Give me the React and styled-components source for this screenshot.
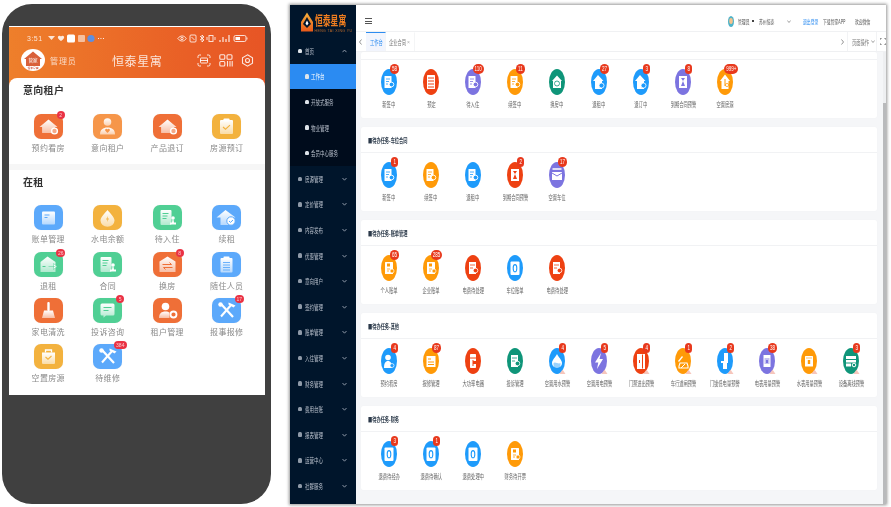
import React from 'react';
import styled, { createGlobalStyle } from 'styled-components';

const Global = createGlobalStyle`
  html, body { margin: 0; padding: 0; background: #fff; }
  body { font-family: "Noto Sans CJK SC", "Liberation Sans", sans-serif; }
  * { box-sizing: border-box; }
`;
const Root = styled.div`
  width: 891px; height: 507px; display: flex; gap: 19px; padding: 4px 0 0 2px;
  overflow: hidden; background: #fff; filter: blur(0.4px);
`;
const Defs = styled.svg`position: absolute; width: 0; height: 0;`;

/* ---------- phone ---------- */
const Phone = styled.div`
  width: 269px; height: 500px; flex: none; background: #404040; border-radius: 30px;
  padding: 22px 6px 0 7px;
`;
const Screen = styled.div`
  width: 256px; height: 369px; border-top: 1px solid #fff;
  background: linear-gradient(90deg, #ee7f2b 0%, #e95f26 70%, #e75525 100%) top / 100% 62px no-repeat, #fff;
  display: flex; flex-direction: column;
`;
const Header = styled.div`height: 51px; flex: none; display: flex; flex-direction: column; padding-top: 3px;`;
const Status = styled.div`
  height: 16px; display: flex; align-items: center; justify-content: space-between;
  padding: 0 17px 0 18px; color: rgba(255,255,255,.8); font: 7px/1 "Liberation Sans", sans-serif; letter-spacing: .5px;
`;
const StatusLeft = styled.div`display: flex; align-items: center; gap: 4px;`;
const AppRow = styled.div`height: 28px; display: flex; align-items: center; padding: 0 11px 0 12px;`;
const Role = styled.span`margin-left: 5px; width: 62px; font-size: 8px; letter-spacing: .9px; color: rgba(255,255,255,.72);`;
const AppTitle = styled.span`width: 85px; font-size: 12px; letter-spacing: .6px; color: rgba(255,255,255,.82);`;
const HeadIcons = styled.div`display: flex; gap: 8px; align-items: center; margin-left: auto;`;
const Section = styled.div`
  background: #fff; border-radius: ${p => p.$first ? '8px 8px 0 0' : '0'};
  height: ${p => p.$h}px; flex: none; padding-top: 6px;
`;
const Divider = styled.div`height: 6px; flex: none; background: #f6f6f6;`;
const SecTitle = styled.div`
  height: 12px; line-height: 12px; padding-left: 14px; font-size: 10px; font-weight: 700; letter-spacing: .3px; color: #333;
`;
const MGrid = styled.div`
  display: grid; grid-template-columns: repeat(4, 59.5px); grid-auto-rows: 46.4px;
  padding-left: 9.5px; margin-top: ${p => p.$mt}px;
`;
const MCell = styled.div`display: flex; flex-direction: column; align-items: center;`;
const MIconBox = styled.div`
  position: relative; width: 29px; height: 25px; border-radius: 7px; background: ${p => p.$c};
  box-shadow: 0 0 1px rgba(0,0,0,.08);
`;
const MLabel = styled.div`margin-top: 4px; height: 10px; line-height: 10px; font-size: 8px; letter-spacing: .35px; color: #8a8a8a; white-space: nowrap;`;
const MBadge = styled.span`
  position: absolute; top: -3px; left: ${p => 27 - p.$w / 2}px;
  width: ${p => p.$w}px; height: 8px; border-radius: 4px; background: #ea3244;
  color: rgba(255,255,255,.75); font: 5px/8px "Liberation Sans", sans-serif; text-align: center;
`;

const W = 'url(#mf)';
const mGlyph = {
  homeClock: c => <><path d="M14 5.500 23 13h-2.600v6H7.600v-6H5Z" fill={W}/><circle cx="20" cy="17" r="3.600" fill="#fff"/><circle cx="20" cy="17" r="2.200" fill={c} opacity=".6"/></>,
  person: c => <><circle cx="14" cy="8" r="3.800" fill={W}/><path d="M6.500 20.500c0-5 3-7 7.500-7s7.500 2 7.500 7Z" fill={W}/><path d="M14 19l-2.200-2.200a1.300 1.300 0 0 1 2.200-1.400 1.300 1.300 0 0 1 2.200 1.400Z" fill={c}/></>,
  clip: c => <><rect x="7.500" y="6" width="13" height="14" rx="1" fill={W}/><rect x="11" y="4.500" width="6" height="3" rx=".8" fill="#fff"/><path d="M10.500 13l2.500 2.200 4.500-4" stroke={c} strokeWidth="1.100" fill="none"/></>,
  bill: c => <><rect x="7.500" y="6.500" width="13" height="13" rx="1" fill={W}/><path d="M10 10h5M10 12.500h3" stroke={c} strokeWidth="1"/></>,
  drop: c => <><path d="M14 5c-1 1.600-7 7-7 10.500a7 6.200 0 0 0 14 0C21 12 15 6.600 14 5Z" fill={W}/><path d="M14.500 11l-2 3.500h1.500l-.5 2.500 2-3.500H14Z" fill={c}/></>,
  contract: c => <><rect x="7" y="5" width="11" height="15" rx="1" fill={W}/><path d="M9 8.500h6M9 11h5M9 13.500h4" stroke={c} strokeWidth="1"/><circle cx="19.500" cy="13" r="1.800" fill="#fff"/><path d="M16.500 19.500h6v-2h-2l-.5-3h-1l-.5 3h-2Z" fill="#fff"/></>,
  homeCheck: c => <><path d="M13 5 23 12.500h-3V20H8v-7.500H4Z" fill={W}/><circle cx="18.500" cy="16" r="4.200" fill="#fff" stroke={c}/><path d="M16.500 16l1.500 1.400 2.500-2.400" stroke={c} fill="none"/></>,
  homeOut: c => <><path d="M13 4.500 21 10v10H6V10Z" fill={W}/><path d="M14 14.500h7M19 11.500l3.500 3-3.500 3Z" fill="#fff" stroke={c} strokeWidth=".5"/><path d="M8 14.500h3" stroke={c}/></>,
  swap: c => <><path d="M14 4.500 22 9.500V20H6V9.500Z" fill={W}/><path d="M9 12.500h9l-2-2M19 15.500h-9l2 2" stroke={c} strokeWidth="1" fill="none"/></>,
  list: c => <><rect x="8" y="6" width="12" height="14.500" rx="1" fill={W}/><rect x="11" y="4.500" width="6" height="3" rx=".6" fill="#fff"/><path d="M10.500 10.500h7M10.500 13h7M10.500 15.500h7M10.500 18h7" stroke={c} strokeWidth=".9"/></>,
  broom: () => <><rect x="12.800" y="4" width="2.400" height="9" rx="1" fill="#fff"/><path d="M9.500 12.500h9l2 7.500H7.500Z" fill={W}/></>,
  chat: c => <><path d="M8.500 5.500h11a1.500 1.500 0 0 1 1.500 1.500v9a1.500 1.500 0 0 1-1.500 1.500h-7l-2.500 2.300v-2.300h-1.500A1.500 1.500 0 0 1 7 16V7a1.500 1.500 0 0 1 1.500-1.500Z" fill={W}/><path d="M10 9.500h8M10 12.500h5" stroke={c} strokeWidth="1"/></>,
  manager: c => <><circle cx="12" cy="8.500" r="3.800" fill="#fff"/><path d="M5.500 20c0-4.500 2.500-6.500 6.500-6.500 2 0 3 .5 4 1v5.500Z" fill={W}/><circle cx="20" cy="16.500" r="3" fill="none" stroke="#fff" strokeWidth="1.800"/><circle cx="20" cy="16.500" r="1" fill={c}/></>,
  tools: () => <><path d="M9 6.500l11.500 12.500" stroke="#fff" strokeWidth="2.200"/><path d="M19 6.500l-10.500 12" stroke="#fff" strokeWidth="2"/><path d="M16 4.500l7 3-2 2-5-3Z" fill="#fff"/><circle cx="8" cy="6.500" r="2.200" fill="#fff"/></>,
  bag: c => <><path d="M7.500 8.500h13v10.500a1 1 0 0 1-1 1h-11a1 1 0 0 1-1-1Z" fill={W}/><path d="M11 8.500V6h6v2.500" stroke="#fff" strokeWidth="1.300" fill="none"/><path d="M11 13l2.500 2.200 3.500-3.200" stroke={c} strokeWidth="1.100" fill="none"/></>,
};

const OR = '#ef6f37', LO = '#f6964a', AM = '#f3b23e', BL = '#5ca9fb', GR = '#50cf94';
const section1 = [
  ['预约看房', OR, 'homeClock', '2'], ['意向租户', LO, 'person'], ['产品退订', OR, 'homeClock'], ['房源预订', AM, 'clip'],
];
const section2 = [
  ['账单管理', BL, 'bill'], ['水电余额', AM, 'drop'], ['待入住', GR, 'contract'], ['续租', BL, 'homeCheck'],
  ['退租', GR, 'homeOut', '26'], ['合同', GR, 'contract'], ['换房', OR, 'swap', '8'], ['随住人员', BL, 'list'],
  ['家电清洗', OR, 'broom'], ['投诉咨询', GR, 'chat', '5'], ['租户管理', OR, 'manager'], ['报事报修', BL, 'tools', '17'],
  ['空置房源', AM, 'bag'], ['待维修', BL, 'tools', '384'],
];
const MItem = ({ d: [label, c, g, b] }) => (
  <MCell>
    <MIconBox $c={c}>
      <svg width="29" height="25" viewBox="0 0 28 25">{mGlyph[g](c)}</svg>
      {b && <MBadge $w={b.length > 2 ? 13 : b.length > 1 ? 9 : 8}>{b}</MBadge>}
    </MIconBox>
    <MLabel>{label}</MLabel>
  </MCell>
);

const StatusIconsLeft = () => (
  <svg width="60" height="9" viewBox="0 0 60 9">
    <path d="M1 2h7l-3.500 4Z" fill="#fff" opacity=".8"/>
    <path d="M11 2.500c1-1.300 2.500-.8 3 0 .5-.8 2-1.300 3 0 .8 1.500-1 3-3 4.500-2-1.500-3.800-3-3-4.500Z" fill="#fff" opacity=".85"/>
    <rect x="20" y=".5" width="8" height="8" rx="1.500" fill="#fff"/>
    <rect x="31" y="1" width="7" height="7" rx="1" fill="#fff" opacity=".55"/>
    <circle cx="44" cy="4.500" r="3.600" fill="#5e8fe0"/>
    <path d="M51 4.500h.9M53.500 4.500h.9M56 4.500h.9" stroke="#fff" strokeWidth="1"/>
  </svg>
);
const StatusIconsRight = () => (
  <svg width="71" height="9" viewBox="0 0 71 9" fill="none" stroke="#fff" strokeOpacity=".8">
    <path d="M.8 4.500c2.500-3.400 6.400-3.400 8.400 0-2 3.400-5.900 3.400-8.400 0Z" /><circle cx="5" cy="4.500" r="1.200"/>
    <rect x="13" y="1" width="6" height="7" rx="1"/><path d="M14.500 3l3 3"/>
    <path d="M23 2l4 4-2 2V1l2 2-4 3"/>
    <rect x="32" y="1.500" width="4" height="6"/><path d="M30 3v3M38 3v3"/>
    <path d="M43 8V6M46 8V3M49 8V5M52 8V1" strokeWidth="1.300"/>
    <rect x="57" y="1.500" width="12" height="6" rx="1.500"/><rect x="58.500" y="3" width="4.500" height="3" fill="#fff" stroke="none"/><path d="M70 3.500v2"/>
  </svg>
);
const PhoneLogo = () => (
  <svg width="24" height="22" viewBox="0 0 24 22">
    <ellipse cx="12" cy="11" rx="12" ry="11" fill="#fff"/>
    <path d="M12 2.500 21 10h-2v7H5v-7H3Z" fill="#d9603a"/>
    <text x="12" y="12.500" fontSize="4.500" fill="#fff" textAnchor="middle" fontFamily="Noto Sans CJK SC">管家</text>
    <text x="12" y="19.800" fontSize="2.800" fill="#c8402a" textAnchor="middle" fontFamily="Noto Sans CJK SC">恒泰星寓</text>
  </svg>
);
const HeadGlyphs = () => (
  <HeadIcons>
    <svg width="14" height="13" viewBox="0 0 14 13" fill="none" stroke="#fff" strokeOpacity=".85" strokeWidth="1">
      <path d="M1 4V2.500A1.500 1.500 0 0 1 2.500 1H4M10 1h1.500A1.500 1.500 0 0 1 13 2.500V4M13 9v1.500a1.500 1.500 0 0 1-1.500 1.500H10M4 12H2.500A1.500 1.500 0 0 1 1 10.500V9"/>
      <rect x="3.500" y="4" width="7" height="5" rx=".8"/><path d="M3 6.500h8"/>
    </svg>
    <svg width="14" height="13" viewBox="0 0 14 13" fill="none" stroke="#fff" strokeOpacity=".85" strokeWidth="1.100">
      <rect x=".8" y=".8" width="5" height="4.500" rx="1"/><rect x="8" y=".8" width="5" height="4.500" rx="1"/><rect x=".8" y="7.500" width="5" height="4.500" rx="1"/>
      <path d="M8.500 7v5.500M11 7v5.500M13.200 7v5.500"/>
    </svg>
    <svg width="13" height="13" viewBox="0 0 13 13" fill="none" stroke="#fff" strokeOpacity=".85" strokeWidth="1.100">
      <path d="M6.500.8l5 2.900v5.600l-5 2.900-5-2.900V3.700Z"/><circle cx="6.500" cy="6.500" r="2"/>
    </svg>
  </HeadIcons>
);

/* ---------- admin window ---------- */
const Window = styled.div`
  width: 596px; height: 499px; margin-top: 1px; flex: none; display: flex; background: #fff;
  box-shadow: 0 0 3px 1px rgba(0,0,0,.42);
`;
const Sidebar = styled.div`width: 65.5px; flex: none; background: #00152b; display: flex; flex-direction: column;`;
const LogoBox = styled.div`height: 33px; flex: none; display: flex; padding: 7px 0 0 10.500px; gap: 2px;`;
const LogoText = styled.div`display: flex; flex-direction: column;`;
const LogoName = styled.span`
  display: block; width: 31px; height: 15px; font-size: 13px; line-height: 15px; font-weight: 700; color: #ee7d20; white-space: nowrap;
  transform: scaleX(.6); transform-origin: left;
`;
const LogoSub = styled.span`
  display: block; width: 31px; margin-top: 2px; font: 3.500px/4px "Liberation Sans", sans-serif; color: #b9692a; letter-spacing: .4px; white-space: nowrap;
`;
const NavRow = styled.div`
  height: 25.600px; flex: none; display: flex; align-items: center; padding-left: ${p => p.$sub ? 15 : 8}px;
  background: ${p => p.$active ? '#2b8bf2' : p.$sub ? '#000c1c' : 'transparent'};
  color: ${p => p.$active ? '#fff' : '#b8c0cc'};
`;
const NavDot = styled.span`width: 3.500px; height: 4.500px; border-radius: 1.500px 1.500px 1px 1px; flex: none; background: ${p => p.$bright ? '#dfe5ea' : '#8f9aa8'};`;
const NavText = styled.span`
  display: block; margin-left: ${p => p.$sub ? 2.5 : 3.5}px; flex: 1; font-size: 7px; white-space: nowrap; transform: scaleX(.64); transform-origin: left;
`;
const NavChevron = styled.svg`width: 5px; height: 4px; margin-right: 9px; flex: none;`;

const Main = styled.div`flex: 1; min-width: 0; display: flex; flex-direction: column;`;
const TopBar = styled.div`height: 27px; flex: none; display: flex; align-items: center; padding: 6px 15px 0 9.500px; border-bottom: 1px solid #f0f1f3;`;
const Burger = styled.div`width: 7px; height: 6px; border-top: 1px solid #555; border-bottom: 1px solid #555; margin-right: auto;
  &::after { content: ""; display: block; height: 1px; margin-top: 1.500px; background: #555; }`;
const Avatar = styled.svg`width: 6px; height: 11px; flex: none;`;
const TopText = styled.span`
  display: block; flex: none; width: ${p => p.$w}px; margin-left: ${p => p.$ml}px; font-size: 5.800px; white-space: nowrap;
  color: ${p => p.$blue ? '#2d8cf0' : '#555'}; transform: scaleX(.66); transform-origin: left;
`;
const TopDot = styled.span`width: 2px; height: 2px; margin-left: 3px; flex: none; background: #444;`;
const SmallChevron = styled.svg`width: 4px; height: 3px; flex: none; margin-left: ${p => p.$ml || 0}px;`;

const TabBar = styled.div`height: 20px; flex: none; display: flex; border-bottom: 1px solid #f0f1f3; background: #fff;`;
const TabPrev = styled.div`width: 10.500px; flex: none; display: flex; align-items: center; justify-content: center;`;
const Tab = styled.div`
  width: ${p => p.$w}px; flex: none; display: flex; align-items: center; padding-left: ${p => p.$pl}px;
  background: ${p => p.$active ? '#f2f5fd' : '#fff'}; border-top: 1px solid ${p => p.$active ? '#2d8cf0' : '#fff'};
  border-right: 1px solid #f4f5f6;
`;
const TabText = styled.span`
  display: block; width: ${p => p.$w}px; flex: none; font-size: 6.500px; white-space: nowrap; color: ${p => p.$blue ? '#2d8cf0' : '#777'};
  transform: scaleX(.66); transform-origin: left;
`;
const TabClose = styled.span`color: #aaa; font: 5px/1 "Liberation Sans", sans-serif; margin-left: 3px;`;
const TabNext = styled.div`margin-left: auto; width: 6px; flex: none; display: flex; align-items: center; justify-content: flex-end;`;
const PageOps = styled.div`
  width: 30px; margin-left: 3px; flex: none; display: flex; align-items: center; padding-left: 4px;
  border-left: 1px solid #f2f3f5; border-right: 1px solid #f2f3f5;
`;
const FullScreen = styled.div`width: 7px; margin-left: 2px; flex: none; display: flex; align-items: center; justify-content: center;`;

const Body = styled.div`flex: 1; min-height: 0; display: flex; background: #f5f6f8; padding-left: 5.500px;`;
const Cards = styled.div`flex: 1; min-width: 0; display: flex; flex-direction: column; gap: 9px;`;
const Rail = styled.div`width: 9px; flex: none; display: flex; justify-content: flex-end;`;
const Track = styled.div`width: 3.500px; height: 100%; background: #eeeff1; padding-top: 51px;`;
const Thumb = styled.div`width: 100%; height: 100%; background: #b9babc;`;
const Card = styled.div`background: #fff; border-radius: 2px; flex: none; height: ${p => p.$first ? 66 : 84}px; box-shadow: 0 0 1px rgba(0,0,0,.05);`;
const CardHead = styled.div`
  height: ${p => p.$first ? 8 : 26}px; border-bottom: 1px solid #f1f2f4; display: flex; align-items: center; padding-left: 6.500px;
`;
const CardTitle = styled.span`
  display: block; font-size: 6.800px; font-weight: 700; color: #2c3a4a; white-space: nowrap; transform: scaleX(.62); transform-origin: left;
`;
const ItemRow = styled.div`display: flex; padding: 9px 0 0 7px;`;
const Item = styled.div`width: 42px; flex: none; display: flex; flex-direction: column; align-items: center;`;
const IconWrap = styled.div`position: relative; width: 16px; height: 26px;`;
const Badge = styled.span`
  position: absolute; top: -5px; left: ${p => 13.500 - p.$w / 2}px; width: ${p => p.$w}px; height: 10px; border-radius: 5px;
  background: #e8391d; color: #fff; font: 6.500px/10px "Liberation Sans", sans-serif; text-align: center;
  white-space: nowrap;
`;
const BadgeNum = styled.span`display: inline-block; transform: scaleX(.7);`;
const ItemLabel = styled.span`
  display: block; margin-top: 5px; height: 8px; line-height: 8px; font-size: 6.500px; color: #666; white-space: nowrap; transform: scaleX(.66);
`;

const B = '#1e9bfb', R = '#ee4112', P = '#7c74e0', O = '#ff9a08', T = '#0f9579';
const aGlyph = {
  sign: c => <><rect x="3.500" y="7" width="7" height="12" fill="#fff" rx=".5"/><path d="M5 10h4M5 12.500h3M5 15h2" stroke={c} strokeWidth=".8"/><circle cx="10.500" cy="15.500" r="2.300" fill={c} stroke="#fff" strokeWidth=".9"/></>,
  list: c => <><rect x="4" y="6" width="8" height="14" fill="#fff" rx=".6"/><path d="M5 9h6M5 12h6M5 15h6M5 18h6" stroke={c} strokeWidth="1"/></>,
  move: c => <><path d="M8 6.500 13 12h-1v7H4v-7H3Z" fill="#fff"/><circle cx="8" cy="14.500" r="2.500" fill="none" stroke={c} strokeWidth=".8"/></>,
  houseOut: c => <><path d="M7 6 12.500 12H11v8H4v-8H2Z" fill="#fff"/><circle cx="10.500" cy="16.500" r="2.500" fill={c} stroke="#fff" strokeWidth=".8"/></>,
  glass: c => <><rect x="4" y="7" width="8" height="12" fill="#fff"/><path d="M6 9h4l-2 3 2 5H6l2-5Z" fill={c}/></>,
  vacant: c => <><path d="M8 5.500 13 12h-1.500v8h-7v-8H3Z" fill="#fff"/><path d="M8 10v7" stroke={c}/><circle cx="10" cy="16" r="1.600" fill="none" stroke={c} strokeWidth=".7"/></>,
  box: c => <><rect x="3.500" y="6" width="9" height="2" fill="#fff" opacity=".75"/><path d="M3 10h10v8H3Z" fill="#fff"/><path d="M3 11l5 3 5-3" stroke={c} fill="none"/></>,
  user: c => <><rect x="4" y="7" width="8" height="12" fill="#fff" rx=".5"/><rect x="6" y="8.500" width="3" height="3" fill={c}/><path d="M6 14h3M6 16h2" stroke={c} strokeWidth=".8"/><circle cx="11" cy="16" r="2" fill={c} stroke="#fff" strokeWidth=".7"/></>,
  zero: c => <><rect x="3.500" y="6.500" width="9" height="13.500" fill="#fff" rx="1"/><ellipse cx="8" cy="13.200" rx="1.800" ry="3.600" fill="none" stroke={c} strokeWidth="1.100"/></>,
  person: c => <><circle cx="7" cy="9.500" r="2.800" fill="#fff"/><path d="M3 20c0-5 1.500-7 4-7s4 2 4 7Z" fill="#fff"/><circle cx="11" cy="17.500" r="2" fill={c} stroke="#fff" strokeWidth=".7"/></>,
  repair: c => <><rect x="3.500" y="8" width="9" height="11" fill="#fff"/><path d="M5 11h3M5 14h6M5 16.500h6" stroke={c} strokeWidth="1"/></>,
  stack: c => <><rect x="5" y="6" width="6" height="14" fill="#fff" rx=".8"/><path d="M5 10h6M8 12v6" stroke={c} strokeWidth="1"/><rect x="8" y="13" width="3" height="3" fill={c}/></>,
  doc: c => <><rect x="4" y="7" width="7" height="12" fill="#fff"/><path d="M5 10h5M5 13h3" stroke={c} strokeWidth=".8"/><circle cx="10.500" cy="15.500" r="2.300" fill={c} stroke="#fff" strokeWidth=".8"/></>,
  drop: c => <><path d="M8 6c-1 2.500-5 6-5 9a5 5 0 0 0 10 0c0-3-4-6.500-5-9Z" fill="#fff"/><path d="M4.500 15c1-1 2-.5 3.500 0s2.500.5 3.500 0v2a3.500 3.500 0 0 1-7 0Z" fill={c} opacity=".45"/></>,
  bolt: () => <path d="M10 5 4 14.500h3.300L6 21l6-10H8.500Z" fill="#fff"/>,
  door: c => <><rect x="4" y="6" width="8" height="15" fill="#fff"/><rect x="9" y="6.500" width="1" height="14" fill={c}/><rect x="6" y="12" width="1" height="3" fill={c}/></>,
  car: () => <><path d="M3 13l4-5 1 1-4 5Z" fill="#fff"/><path d="M5 15h7l1 3v2H4v-2Z" fill="none" stroke="#fff" strokeWidth="1.100"/><path d="M6 20l4-4" stroke="#fff"/></>,
  lock: () => <><rect x="7" y="5" width="4" height="9" fill="#fff"/><rect x="4" y="13" width="7" height="2" fill="#fff"/><rect x="6" y="15" width="4" height="6" fill="#fff"/></>,
  meter: c => <><rect x="4.500" y="7" width="7" height="12" fill="#fff"/><rect x="5.500" y="10" width="5" height="6" fill={c} opacity=".45"/><rect x="7" y="12" width="2" height="3" fill={c}/></>,
  water: c => <><rect x="4" y="8" width="8" height="10.500" fill="#fff" rx=".6"/><rect x="6.800" y="12" width="2.400" height="4" fill={c}/><path d="M5 10h6" stroke={c} strokeWidth=".6"/></>,
  device: () => <><rect x="3" y="8" width="10" height="3" fill="#fff"/><rect x="3" y="12" width="10" height="2.500" fill="#fff"/><rect x="3" y="15.500" width="5" height="3" fill="#fff"/><circle cx="11" cy="17" r="1.800" fill="none" stroke="#fff"/></>,
};
const Warn = () => <path d="M13.500 21.500l3 4.500h-6Z" fill="#f6c6bc"/>;
const AIcon = ({ c, g, warn }) => (
  <svg width="16" height="26" viewBox="0 0 16 26" overflow="visible">
    <ellipse cx="8" cy="13" rx="8" ry="13" fill={c}/>
    {aGlyph[g](c)}
    {warn && <Warn/>}
  </svg>
);

const cards = [
  { items: [
    ['新签中', B, 'sign', '58'], ['预定', R, 'list'], ['待入住', P, 'sign', '110'], ['续签中', O, 'sign', '11'], ['换房中', T, 'move'],
    ['退租中', B, 'houseOut', '27'], ['退订中', B, 'houseOut', '3'], ['到期合同预警', P, 'glass', '8'], ['空置房源', O, 'vacant', '999+'],
  ] },
  { title: '待办任务-车位合同', items: [
    ['新签中', B, 'sign', '1'], ['续签中', O, 'sign'], ['退租中', B, 'sign'], ['到期合同预警', R, 'glass', '2'], ['空置车位', P, 'box', '17'],
  ] },
  { title: '待办任务-账单管理', items: [
    ['个人账单', O, 'user', '65'], ['企业账单', O, 'user', '285'], ['电费待处理', R, 'doc'], ['车位账单', B, 'zero'], ['电费待处理', R, 'doc'],
  ] },
  { title: '待办任务-其他', items: [
    ['预约看房', B, 'person', '4'], ['报修管理', O, 'repair', '87'], ['大功率电器', R, 'stack'], ['投诉管理', T, 'doc'],
    ['空置用水预警', B, 'drop', '4', 1], ['空置用电预警', P, 'bolt', '5', 1], ['门禁进出预警', R, 'door', '4', 1], ['车行道闸预警', O, 'car', '1', 1],
    ['门锁低电量预警', B, 'lock', '2', 1], ['电表用量预警', P, 'meter', '38', 1], ['水表用量预警', O, 'water', '', 1], ['设备离线预警', T, 'device', '3', 1],
  ] },
  { title: '待办任务-财务', items: [
    ['退费待经办', B, 'zero', '3'], ['退费待确认', B, 'zero', '1'], ['退费处理中', B, 'zero'], ['财务待开票', O, 'user'],
  ] },
];

const subNav = ['开放式服务', '物业管理', '会员中心服务'];
const nav = ['房源管理', '定价管理', '内容发布', '优惠管理', '意向用户', '签约管理', '账单管理', '入住管理', '财务管理', '费用台账', '报表管理', '运营中心', '社群服务'];
const Chevron = ({ up }) => (
  <NavChevron viewBox="0 0 5 4"><path d={up ? 'M.5 3.200 2.500 1l2 2.200' : 'M.5 1l2 2.200L4.500 1'} fill="none" stroke="#aab4c0" strokeWidth=".8"/></NavChevron>
);
const badgeWidth = b => (b.length > 3 ? 14 : b.length === 3 ? 11 : b.length === 2 ? 9 : 7);
const DownV = ({ ml }) => (
  <SmallChevron $ml={ml} viewBox="0 0 4 3"><path d="M.4.500 2 2.500 3.600.500" fill="none" stroke="#666" strokeWidth=".6"/></SmallChevron>
);

export default function App() {
  return (
    <Root>
      <Global/>
      <Defs><defs><linearGradient id="mf" x1="0" y1="0" x2="0" y2="1"><stop offset="0" stopColor="#fff"/><stop offset="1" stopColor="#fff" stopOpacity=".55"/></linearGradient></defs></Defs>
      <Phone>
        <Screen>
          <Header>
            <Status>
              <StatusLeft><span>3:51</span><StatusIconsLeft/></StatusLeft>
              <StatusIconsRight/>
            </Status>
            <AppRow>
              <PhoneLogo/>
              <Role>管理员</Role>
              <AppTitle>恒泰星寓</AppTitle>
              <HeadGlyphs/>
            </AppRow>
          </Header>
          <Section $first $h={86}>
            <SecTitle>意向租户</SecTitle>
            <MGrid $mt={18}>{section1.map(d => <MItem key={d[0]} d={d}/>)}</MGrid>
          </Section>
          <Divider/>
          <Section $h={225}>
            <SecTitle>在租</SecTitle>
            <MGrid $mt={17.3}>{section2.map(d => <MItem key={d[0]} d={d}/>)}</MGrid>
          </Section>
        </Screen>
      </Phone>
      <Window>
        <Sidebar>
          <LogoBox>
            <svg width="12" height="20" viewBox="0 0 12 20">
              <defs><linearGradient id="lg" x1="0" y1="0" x2="0" y2="1"><stop offset="0" stopColor="#f5b13c"/><stop offset="1" stopColor="#e8591a"/></linearGradient></defs>
              <path d="M6 .5 12 10v9.500H0V10Z" fill="url(#lg)"/>
              <path d="M6 5 2 12l4 4 4-4Z" fill="#00152b"/>
              <path d="M6 8.500l1.500 3L6 13.500l-1.500-2Z" fill="#fff"/>
            </svg>
            <LogoText><LogoName>恒泰星寓</LogoName><LogoSub>HENG TAI XING YU</LogoSub></LogoText>
          </LogoBox>
          <NavRow><NavDot $bright/><NavText>首页</NavText><Chevron up/></NavRow>
          <NavRow $sub $active><NavDot $bright/><NavText $sub>工作台</NavText></NavRow>
          {subNav.map(n => <NavRow $sub key={n}><NavDot $bright/><NavText $sub>{n}</NavText></NavRow>)}
          {nav.map(n => <NavRow key={n}><NavDot/><NavText>{n}</NavText><Chevron/></NavRow>)}
        </Sidebar>
        <Main>
          <TopBar>
            <Burger/>
            <Avatar viewBox="0 0 6 11"><ellipse cx="3" cy="5.500" rx="3" ry="5.500" fill="#4fb3c9"/><ellipse cx="3" cy="5" rx="1.800" ry="3" fill="#f5c28c"/></Avatar>
            <TopText $w={11} $ml={4}>管理员</TopText>
            <TopDot/>
            <TopText $w={16} $ml={5}>苏州恒泰</TopText>
            <DownV ml={12}/>
            <TopText $w={15} $ml={12} $blue>退出登录</TopText>
            <TopText $w={22} $ml={5}>下载管家APP</TopText>
            <TopText $w={16} $ml={10}>欢迎微信</TopText>
          </TopBar>
          <TabBar>
            <TabPrev><svg width="3" height="6" viewBox="0 0 3 6"><path d="M2.500.500.500 3l2 2.500" fill="none" stroke="#666" strokeWidth=".7"/></svg></TabPrev>
            <Tab $active $w={19.500} $pl={4}><TabText $w={14} $blue>工作台</TabText></Tab>
            <Tab $w={29} $pl={3.500}><TabText $w={15}>企业合同</TabText><TabClose>×</TabClose></Tab>
            <TabNext><svg width="3" height="6" viewBox="0 0 3 6"><path d="M.500.500l2 2.500-2 2.500" fill="none" stroke="#666" strokeWidth=".7"/></svg></TabNext>
            <PageOps><TabText $w={19}>页面操作</TabText><DownV/></PageOps>
            <FullScreen><svg width="6" height="7" viewBox="0 0 6 7"><path d="M0 2V0h2M4 0h2v2M6 5v2H4M2 7H0V5" fill="none" stroke="#555" strokeWidth=".8"/></svg></FullScreen>
          </TabBar>
          <Body>
            <Cards>
              {cards.map((card, i) => (
                <Card key={i} $first={!card.title}>
                  <CardHead $first={!card.title}>{card.title && <CardTitle>■{card.title}</CardTitle>}</CardHead>
                  <ItemRow>
                    {card.items.map(([label, c, g, b, warn], j) => (
                      <Item key={j}>
                        <IconWrap>
                          <AIcon c={c} g={g} warn={warn}/>
                          {b && <Badge $w={badgeWidth(b)}><BadgeNum>{b}</BadgeNum></Badge>}
                        </IconWrap>
                        <ItemLabel>{label}</ItemLabel>
                      </Item>
                    ))}
                  </ItemRow>
                </Card>
              ))}
            </Cards>
            <Rail><Track><Thumb/></Track></Rail>
          </Body>
        </Main>
      </Window>
    </Root>
  );
}
